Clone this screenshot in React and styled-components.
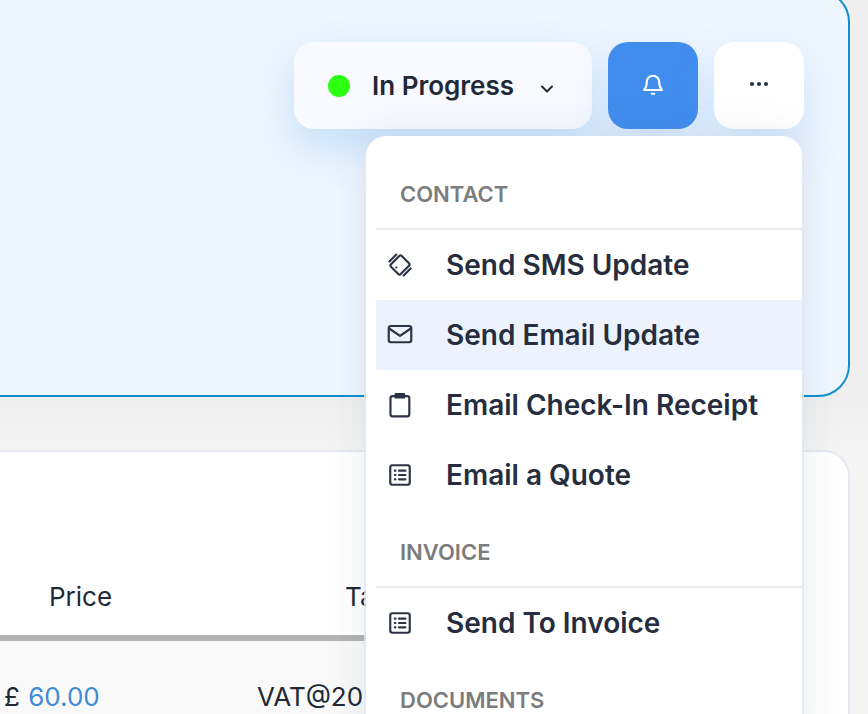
import React from "react";
import styled, { createGlobalStyle } from "styled-components";

const GlobalStyle = createGlobalStyle`
  html, body { margin: 0; padding: 0; background: #f4f4f4; }
  body { font-family: Inter, "Liberation Sans", sans-serif; color: #212936; }
`;

const Page = styled.div`
  position: relative;
  width: 868px;
  height: 714px;
  overflow: hidden;
  background: linear-gradient(180deg, #efefef 396px, #f4f4f4 450px);
`;

const Hero = styled.section`
  box-sizing: border-box;
  height: 407px;
  margin: -10px 18px 0 -40px;
  padding: 50px 44px 0 0;
  background: #eef6fe;
  border: 2px solid #0f8fd0;
  border-radius: 32px;
`;

const Actions = styled.div`
  display: flex;
  justify-content: flex-end;
  gap: 16px;
`;

const StatusPill = styled.div`
  box-sizing: border-box;
  width: 298px;
  height: 87px;
  padding: 0 37px 0 34px;
  display: flex;
  align-items: center;
  background: #f8faff;
  border-radius: 20px;
  box-shadow: 0 18px 40px rgba(100, 170, 240, 0.3);
`;

const StatusDot = styled.span`
  width: 22px;
  height: 22px;
  border-radius: 50%;
  background: #2cff10;
`;

const StatusLabel = styled.span`
  margin-left: 22px;
  font-size: 26px;
  font-weight: 600;
  flex: 1;
`;

const IconButton = styled.button`
  width: 90px;
  height: 87px;
  padding: 0 0 4px;
  border: 0;
  border-radius: 20px;
  display: flex;
  align-items: center;
  justify-content: center;
  color: ${(p) => (p.$primary ? "#ffffff" : "#212936")};
  background: ${(p) => (p.$primary ? "#418dee" : "#ffffff")};
  box-shadow: 0 18px 40px rgba(100, 170, 240, 0.22);
`;

const TableCard = styled.section`
  box-sizing: border-box;
  height: 320px;
  margin: 53px 18px 0 -40px;
  background: #ffffff;
  border: 2px solid #e4e9f3;
  border-bottom: 0;
  border-radius: 26px 26px 0 0;
`;

const TableInner = styled.div`
  width: 440px;
  height: 100%;
`;

const HeadRow = styled.div`
  box-sizing: border-box;
  height: 189px;
  display: grid;
  grid-template-columns: 87px 296px 1fr;
  align-items: end;
  padding-bottom: 23px;
  border-bottom: 6px solid #b3b3b3;
  font-size: 26px;
  font-weight: 400;
`;

const BodyRow = styled.div`
  display: grid;
  grid-template-columns: 42px 253px 1fr;
  padding-top: 40px;
  height: 100%;
  background: #f9f9f9;
  font-size: 26px;
`;

const Amount = styled.span`
  margin-left: 1px;
  color: #3f8bd6;
`;

const Menu = styled.div`
  position: absolute;
  top: 136px;
  left: 366px;
  box-sizing: border-box;
  width: 436px;
  height: 620px;
  padding: 0 0 0 10px;
  background: #ffffff;
  border-radius: 20px;
  box-shadow: 0 4px 0 2px rgba(225, 232, 245, 0.8), 0 0 40px rgba(40, 60, 100, 0.1);
`;

const GroupTitle = styled.div`
  box-sizing: border-box;
  height: ${(p) => p.$height}px;
  padding: 0 0 21px 24px;
  display: flex;
  align-items: flex-end;
  border-bottom: 2px solid #ececec;
  font-size: 22px;
  font-weight: 600;
  color: #7c7c7c;
`;

const MenuItem = styled.div`
  height: 70px;
  display: flex;
  align-items: center;
  background: ${(p) => (p.$active ? "#ecf3fd" : "transparent")};
  font-size: 28px;
  font-weight: 600;
  color: #262d3e;
`;

const ItemIcon = styled.span`
  width: 70px;
  padding-left: 11px;
  box-sizing: border-box;
  display: flex;
  color: #2c3345;
`;

const Svg = ({ children, size = 26, width = 2 }) => (
  <svg width={size} height={size} viewBox="0 0 24 24" fill="none" stroke="currentColor"
    strokeWidth={width} strokeLinecap="round" strokeLinejoin="round">
    {children}
  </svg>
);

const PhoneIcon = () => (
  <Svg>
    <rect x="5.7" y="5" width="12.6" height="14" rx="1.6" transform="rotate(45 12 12)" />
    <path d="M8.6 14.3h.1" />
    <path d="M2.2 8.8l6.4-6.4M15.4 21.6l6.4-6.4" />
  </Svg>
);

const MailIcon = () => (
  <Svg>
    <rect x="1.6" y="3.7" width="20.8" height="15" rx="2" />
    <path d="M2 6l10 6.8L22 6" />
  </Svg>
);

const ClipboardIcon = () => (
  <Svg>
    <rect x="3.2" y="3.8" width="17.4" height="18.7" rx="2" />
    <rect x="7" y="1" width="9.8" height="5" rx="0.8" fill="currentColor" stroke="none" />
  </Svg>
);

const ListIcon = () => (
  <Svg>
    <rect x="3" y="3" width="18" height="18" rx="2" />
    <path d="M7.2 8h.6M7.2 12h.6M7.2 16h.6M11 8h6M11 12h6M11 16h6" />
  </Svg>
);

const contactItems = [
  { id: 1, icon: <PhoneIcon />, label: "Send SMS Update" },
  { id: 2, icon: <MailIcon />, label: "Send Email Update", active: true },
  { id: 3, icon: <ClipboardIcon />, label: "Email Check-In Receipt" },
  { id: 4, icon: <ListIcon />, label: "Email a Quote" },
];

const App = () => (
  <Page>
    <GlobalStyle />
    <Hero>
      <Actions>
        <StatusPill>
          <StatusDot />
          <StatusLabel>In Progress</StatusLabel>
          <svg width="16" height="16" viewBox="0 0 16 16" fill="none" stroke="#212936" strokeWidth="2"
            strokeLinecap="round" strokeLinejoin="round" style={{ marginTop: 6 }}>
            <path d="M3 5.5 8 10.5 13 5.5" />
          </svg>
        </StatusPill>
        <IconButton $primary>
          <svg width="26" height="26" viewBox="0 0 24 24" fill="none" stroke="currentColor" strokeWidth="1.9"
            strokeLinecap="round" strokeLinejoin="round">
            <path d="M6.3 10a5.7 5.7 0 0 1 11.4 0c0 4 .8 5.6 2.5 7.5H3.8c1.7-1.9 2.5-3.5 2.5-7.5z" />
            <path d="M10.8 21h2.4" />
          </svg>
        </IconButton>
        <IconButton>
          <svg width="20" height="6" viewBox="0 0 20 6" fill="#2c3345">
            <circle cx="3" cy="3" r="2.1" />
            <circle cx="10" cy="3" r="2.1" />
            <circle cx="17" cy="3" r="2.1" />
          </svg>
        </IconButton>
      </Actions>
    </Hero>
    <TableCard>
      <TableInner>
        <HeadRow>
          <span />
          <span>Price</span>
          <span>Tax</span>
        </HeadRow>
        <BodyRow>
          <span />
          <span>£ <Amount>60.00</Amount></span>
          <span>VAT@20%</span>
        </BodyRow>
      </TableInner>
    </TableCard>
    <Menu>
      <GroupTitle $height={94}>CONTACT</GroupTitle>
      {contactItems.map((item) => (
        <MenuItem key={item.id} $active={item.active}>
          <ItemIcon>{item.icon}</ItemIcon>
          {item.label}
        </MenuItem>
      ))}
      <GroupTitle $height={78}>INVOICE</GroupTitle>
      <MenuItem>
        <ItemIcon><ListIcon /></ItemIcon>
        Send To Invoice
      </MenuItem>
      <GroupTitle $height={78}>DOCUMENTS</GroupTitle>
    </Menu>
  </Page>
);

export default App;
